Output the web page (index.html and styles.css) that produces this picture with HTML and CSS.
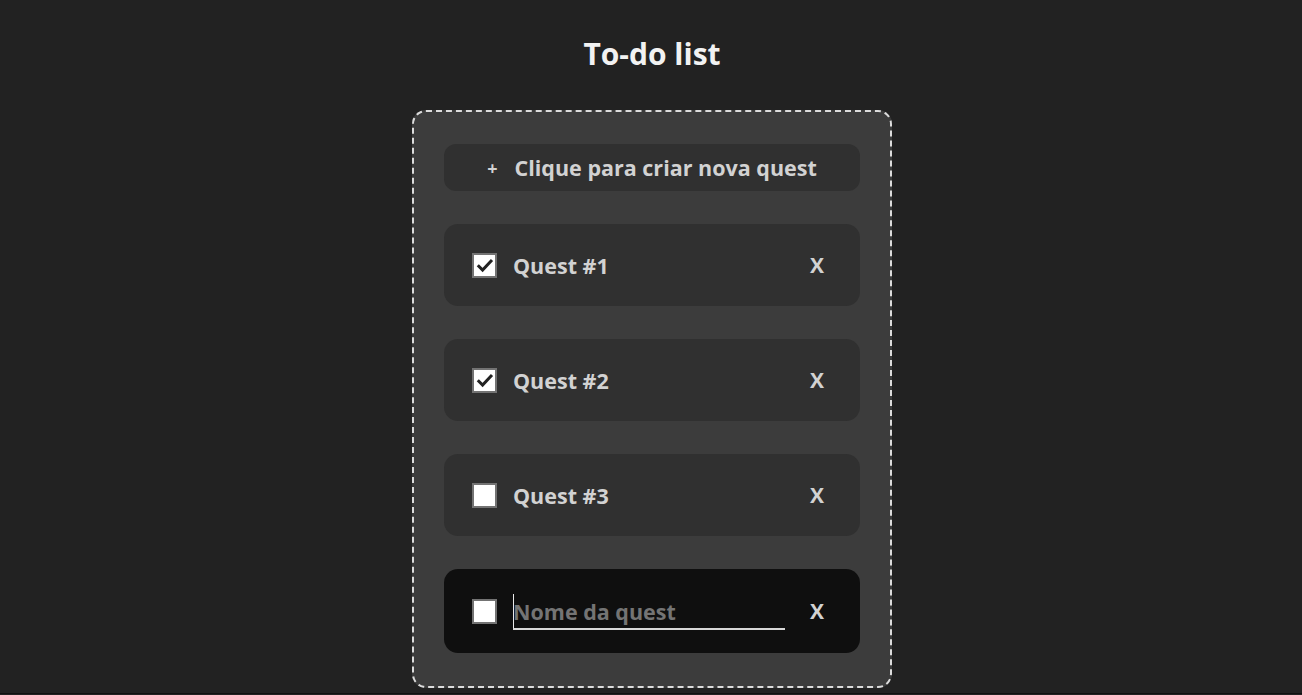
FILE: index.html
```html
<!DOCTYPE html>
<html lang="pt">
<head>
<meta charset="utf-8">
<title>To-do list</title>
<link rel="stylesheet" href="styles.css">
</head>
<body>
<h1 class="title">To-do list</h1>
<main class="board">
  <button class="add-btn"><span class="plus">+</span>Clique para criar nova quest</button>
  <div class="quest">
    <span class="check checked"><svg viewBox="0 0 20 20" width="20" height="20"><path d="M2.8 10.2 L7.6 15 L17 5" fill="none" stroke="#222" stroke-width="3"/></svg></span>
    <span class="quest-name">Quest #1</span>
    <span class="remove">X</span>
  </div>
  <div class="quest">
    <span class="check checked"><svg viewBox="0 0 20 20" width="20" height="20"><path d="M2.8 10.2 L7.6 15 L17 5" fill="none" stroke="#222" stroke-width="3"/></svg></span>
    <span class="quest-name">Quest #2</span>
    <span class="remove">X</span>
  </div>
  <div class="quest">
    <span class="check"></span>
    <span class="quest-name">Quest #3</span>
    <span class="remove">X</span>
  </div>
  <div class="quest editing">
    <span class="check"></span>
    <span class="quest-input"><span class="caret"></span><span class="placeholder">Nome da quest</span></span>
    <span class="remove">X</span>
  </div>
</main>
</body>
</html>
```

FILE: styles.css
```css
html, body {
  margin: 0;
  padding: 0;
}
body {
  background: #222222;
  font-family: "Open Sans", "Noto Sans", sans-serif;
  color: #d2d2d2;
  min-height: 694px;
  border-bottom: 1px solid #111;
  box-sizing: border-box;
  padding-left: 2px;
}
.title {
  margin: 0;
  padding-top: 34px;
  height: 76px;
  box-sizing: border-box;
  text-align: center;
  font-size: 30px;
  line-height: 40px;
  font-weight: 700;
  color: #f2f2f2;
}
.board {
  width: 480px;
  margin: 34px auto 0;
  box-sizing: border-box;
  background: #3c3c3c;
  border: 2px dashed #dcdcdc;
  border-radius: 14px;
  padding: 32px 30px 33px;
  display: flex;
  flex-direction: column;
  gap: 33px;
}
.add-btn {
  height: 47px;
  border: none;
  border-radius: 12px;
  background: #303030;
  color: #d2d2d2;
  font-family: inherit;
  font-weight: 700;
  font-size: 21.5px;
  display: flex;
  align-items: center;
  justify-content: center;
  padding: 0;
}
.plus {
  font-size: 18px;
  margin-right: 17px;
}
.quest {
  height: 82px;
  background: #303030;
  border-radius: 14px;
  display: flex;
  align-items: center;
  padding: 0 36px 0 28px;
  font-weight: 700;
  font-size: 21.5px;
}
.quest.editing {
  height: 84px;
  background: #0f0f0f;
}
.check {
  width: 25px;
  height: 25px;
  box-sizing: border-box;
  border: 2px solid #737373;
  background: #fff;
  display: flex;
  align-items: center;
  justify-content: center;
  flex: none;
}
.check svg {
  display: block;
}
.quest-name {
  flex: 1;
  margin-left: 16px;
  color: #d2d2d2;
}
.quest-input {
  flex: 1;
  margin-left: 16px;
  height: 34px;
  border-bottom: 2px solid #d8d8d8;
  display: flex;
  align-items: center;
  position: relative;
  margin-top: 2px;
}
.caret {
  width: 1px;
  height: 34px;
  background: #e8e8e8;
  position: absolute;
  left: 0;
  top: 0;
}
.placeholder {
  color: #747474;
  font-weight: 700;
}
.remove {
  width: 14px;
  margin-left: 25px;
  text-align: center;
  font-weight: 700;
  font-size: 21px;
  color: #d2d2d2;
}
```
